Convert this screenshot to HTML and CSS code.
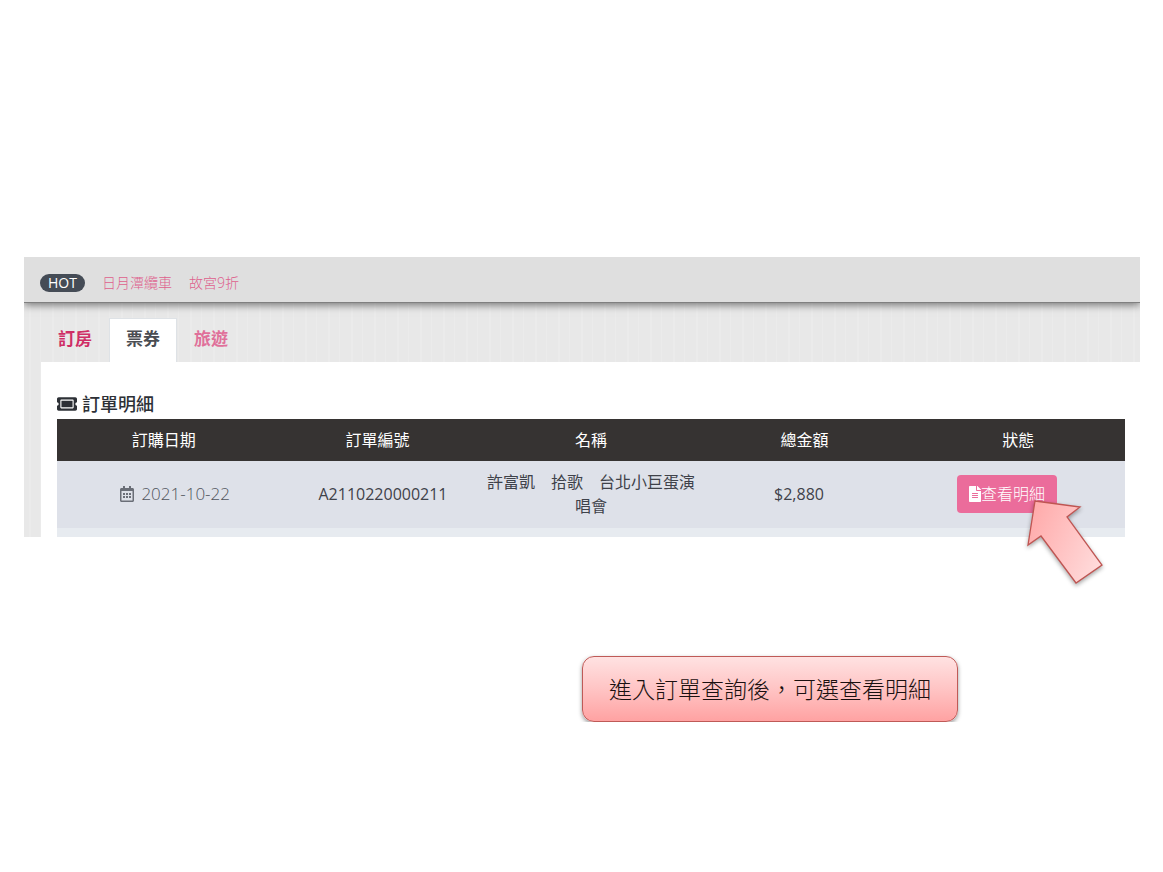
FILE: index.html
```html
<!DOCTYPE html>
<html lang="zh-Hant">
<head>
    <meta charset="UTF-8">
    <meta name="viewport" content="width=device-width, initial-scale=1.0">
    <title>訂單明細</title>

    <link rel="stylesheet" href="styles.css">
</head>
<body>

    <main class="page">
        <div class="hot-bar">
            <span class="badge">HOT</span>
            <a href="#">日月潭纜車</a>
            <a href="#">故宮9折</a>
        </div>

        <nav class="tabs">
            <a class="tab tab-hover" href="#">訂房</a>
            <a class="tab tab-active" href="#">票券</a>
            <a class="tab" href="#">旅遊</a>
        </nav>

        <section class="panel">
            <h1>
                <svg class="icon-ticket" viewBox="0 0 576 512" aria-hidden="true"><path fill="currentColor" d="M128 160h320v192H128V160zm400 96c0 26.51 21.49 48 48 48v96c0 26.51-21.49 48-48 48H48c-26.51 0-48-21.49-48-48v-96c26.51 0 48-21.49 48-48s-21.49-48-48-48v-96c0-26.51 21.49-48 48-48h480c26.51 0 48 21.49 48 48v96c-26.51 0-48 21.49-48 48zm-48-104c0-13.255-10.745-24-24-24H120c-13.255 0-24 10.745-24 24v208c0 13.255 10.745 24 24 24h336c13.255 0 24-10.745 24-24V152z"/></svg>
                訂單明細
            </h1>

            <table class="orders">
                <thead>
                    <tr>
                        <th>訂購日期</th>
                        <th>訂單編號</th>
                        <th>名稱</th>
                        <th>總金額</th>
                        <th>狀態</th>
                    </tr>
                </thead>
                <tbody>
                    <tr>
                        <td class="date">
                            <svg class="icon-calendar" viewBox="0 0 448 512" aria-hidden="true"><path fill="currentColor" d="M148 288h-40c-6.6 0-12-5.4-12-12v-40c0-6.6 5.4-12 12-12h40c6.6 0 12 5.4 12 12v40c0 6.6-5.4 12-12 12zm108-12v-40c0-6.6-5.4-12-12-12h-40c-6.6 0-12 5.4-12 12v40c0 6.6 5.4 12 12 12h40c6.6 0 12-5.4 12-12zm96 0v-40c0-6.6-5.4-12-12-12h-40c-6.6 0-12 5.4-12 12v40c0 6.6 5.4 12 12 12h40c6.6 0 12-5.4 12-12zm-96 96v-40c0-6.6-5.4-12-12-12h-40c-6.6 0-12 5.4-12 12v40c0 6.6 5.4 12 12 12h40c6.6 0 12-5.4 12-12zm-96 0v-40c0-6.6-5.4-12-12-12h-40c-6.6 0-12 5.4-12 12v40c0 6.6 5.4 12 12 12h40c6.6 0 12-5.4 12-12zm192 0v-40c0-6.6-5.4-12-12-12h-40c-6.6 0-12 5.4-12 12v40c0 6.6 5.4 12 12 12h40c6.6 0 12-5.4 12-12zm96-260v352c0 26.5-21.5 48-48 48H48c-26.5 0-48-21.5-48-48V112c0-26.5 21.5-48 48-48h48V12c0-6.6 5.4-12 12-12h40c6.6 0 12 5.4 12 12v52h128V12c0-6.6 5.4-12 12-12h40c6.6 0 12 5.4 12 12v52h48c26.5 0 48 21.5 48 48zm-48 346V160H48v298c0 3.3 2.7 6 6 6h340c3.3 0 6-2.7 6-6z"/></svg>
                            2021-10-22
                        </td>
                        <td>A2110220000211</td>
                        <td>許富凱　拾歌　台北小巨蛋演唱會</td>
                        <td>$2,880</td>
                        <td>
                            <button type="button" class="btn">
                                <svg class="icon-file" viewBox="0 0 384 512" aria-hidden="true"><path fill="currentColor" d="M224 136V0H24C10.7 0 0 10.7 0 24v464c0 13.3 10.7 24 24 24h336c13.3 0 24-10.7 24-24V160H248c-13.2 0-24-10.8-24-24zm64 236c0 6.6-5.4 12-12 12H108c-6.6 0-12-5.4-12-12v-8c0-6.6 5.4-12 12-12h168c6.6 0 12 5.4 12 12v8zm0-64c0 6.6-5.4 12-12 12H108c-6.6 0-12-5.4-12-12v-8c0-6.6 5.4-12 12-12h168c6.6 0 12 5.4 12 12v8zm0-72v8c0 6.6-5.4 12-12 12H108c-6.6 0-12-5.4-12-12v-8c0-6.6 5.4-12 12-12h168c6.6 0 12 5.4 12 12zm96-114.1v6.1H256V0h6.1c6.4 0 12.5 2.5 17 7l97.9 98c4.5 4.5 7 10.6 7 16.9z"/></svg>查看明細
                            </button>
                        </td>
                    </tr>
                </tbody>
            </table>
        </section>

        <!-- arrow pointing at the detail button -->
        <svg class="arrow" viewBox="0 0 84 95" aria-hidden="true">
            <defs>
                <linearGradient id="arrowFill" x1="0" y1="0.3" x2="1" y2="0.8">
                    <stop offset="0" stop-color="#ffacac"/>
                    <stop offset="1" stop-color="#ffdcdc"/>
                </linearGradient>
            </defs>
            <path d="M11 4L56 10L43 20L78 68L52 86L17 39L4 48Z" fill="url(#arrowFill)" stroke="#bf5552" stroke-width="1.3"/>
        </svg>
    </main>

    <p class="callout">進入訂單查詢後，可選查看明細</p>

</body>
</html>
```

FILE: styles.css
```css
body {
    font-family: "Open Sans", "Noto Sans CJK TC", sans-serif;
    font-size: 16px;
    line-height: 24px;
    margin: 0;
    padding: 257px 23px 0 24px;
    color: #3f424a;
    background-color: white;
}

a {
    color: #e0709a;
    text-decoration: none;
}

.page {
    position: relative;
    background-color: #e8e8e8;
    background-image: repeating-linear-gradient(90deg, transparent 0 5px, #ebebeb 5px 7px, transparent 7px 16px, #ebebeb 16px 17px, transparent 17px 23px);
}

.hot-bar {
    display: flex;
    align-items: center;
    gap: 17px;
    height: 46px;
    padding: 6px 16px 0;
    box-sizing: border-box;
    font-size: 14px;
    background-color: #dfdfdf;
    border-bottom: 1px solid #808080;
    box-shadow: 0 2px 8px rgba(0, 0, 0, 0.5);
    clip-path: inset(0 0 -16px 0);
}

.hot-bar a {
    font-weight: 300;
    color: #de5f8d;
}

.badge {
    padding: 0 8px;
    border-radius: 9px;
    line-height: 18px;
    color: white;
    background-color: #454c56;
}

.tabs {
    display: flex;
    padding: 15px 17px 0;
}

.tab {
    padding: 8px 16px 11px;
    border: 1px solid transparent;
    border-bottom: none;
    font-size: 17px;
    font-weight: 600;
}

.tab-hover {
    color: #cf2e66;
}

.tab-active {
    color: #4a4d52;
    background-color: white;
    border-color: #dee2e6;
}

.panel {
    margin-left: 17px;
    padding: 30px 15px 0 16px;
    background-color: white;
}

h1 {
    display: flex;
    align-items: center;
    gap: 5px;
    margin: 0;
    padding-bottom: 3px;
    font-size: 18px;
    font-weight: 500;
    color: #2d3036;
}

.orders {
    display: block;
    text-align: center;
    border-bottom: 9px solid #e7ebf0;
}

thead, tbody {
    display: block;
}

.orders tr {
    display: flex;
    align-items: center;
}

.orders th, .orders td {
    flex: 1;
    padding: 0;
}

.orders thead tr {
    height: 42px;
    color: white;
    background-color: #363332;
}

.orders th {
    font-weight: 400;
}

.orders tbody tr {
    padding: 9px 14px 10px;
    background-color: #dee1e9;
}

.orders .date {
    font-size: 17px;
    font-weight: 300;
    color: #50545c;
}

.btn {
    padding: 7px 12px;
    border: none;
    border-radius: 4px;
    font: inherit;
    font-weight: 300;
    color: white;
    background-color: #eb6c9b;
    cursor: pointer;
}

.btn:hover {
    background-color: #e25a8c;
}

.icon-ticket {
    width: 20px;
    height: 18px;
}

.icon-calendar {
    width: 14px;
    height: 16px;
    margin-right: 3px;
    vertical-align: -2px;
    color: #6a6e77;
}

.icon-file {
    width: 12px;
    height: 16px;
    vertical-align: -2px;
}

.arrow {
    position: absolute;
    top: 240px;
    right: 32px;
    width: 84px;
    height: 95px;
    filter: drop-shadow(0 2px 2px rgba(0, 0, 0, 0.35));
}

.callout {
    width: fit-content;
    margin: 119px 0 0 50%;
    padding: 20px 26px;
    border: 1px solid #bf5a57;
    border-radius: 12px;
    font-size: 23px;
    font-weight: 300;
    color: #1a1010;
    background-image: linear-gradient(#ffe2e2, #ffc4c4 50%, #ffa2a2);
    box-shadow: 0 2px 4px rgba(0, 0, 0, 0.4);
}
```
